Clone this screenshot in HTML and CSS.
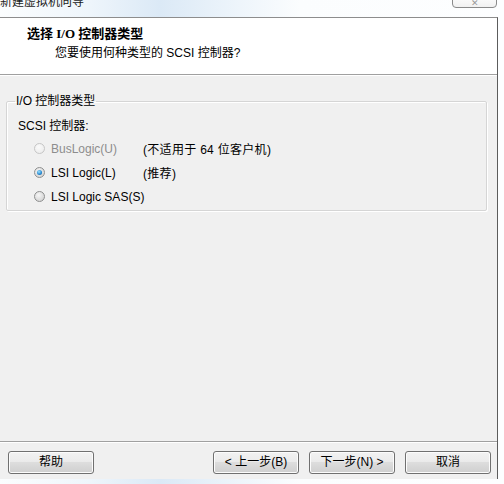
FILE: index.html
```html
<!DOCTYPE html>
<html lang="zh-CN">
<head>
<meta charset="utf-8">
<title>新建虚拟机向导</title>
<link rel="stylesheet" href="styles.css">
</head>
<body>
<div class="window">
  <div class="titlebar">
    <span class="title-text">新建虚拟机向导</span>
    <span class="close-btn"><span class="close-glyph">✕</span></span>
  </div>
  <div class="dialog">
    <div class="header">
      <div class="header-title">选择 I/O 控制器类型</div>
      <div class="header-sub">您要使用何种类型的 SCSI 控制器?</div>
    </div>
    <div class="main">
      <fieldset class="group">
        <legend class="group-legend">I/O 控制器类型</legend>
        <div class="row label-row">SCSI 控制器:</div>
        <div class="row radio-row disabled">
          <span class="radio"></span>
          <span class="radio-label">BusLogic(U)</span>
          <span class="note">(不适用于 64 位客户机)</span>
        </div>
        <div class="row radio-row">
          <span class="radio checked"></span>
          <span class="radio-label">LSI Logic(L)</span>
          <span class="note">(推荐)</span>
        </div>
        <div class="row radio-row">
          <span class="radio"></span>
          <span class="radio-label">LSI Logic SAS(S)</span>
        </div>
      </fieldset>
    </div>
    <div class="footer">
      <button class="btn">帮助</button>
      <span class="spacer"></span>
      <button class="btn">&lt; 上一步(B)</button>
      <button class="btn">下一步(N) &gt;</button>
      <button class="btn">取消</button>
    </div>
  </div>
  <div class="bottom-strip"></div>
</div>
</body>
</html>
```
FILE: styles.css
```css
html, body {
  margin: 0;
  padding: 0;
}
body {
  width: 504px;
  height: 484px;
  overflow: hidden;
  font-family: "Liberation Sans", "Noto Sans CJK SC", sans-serif;
  font-size: 12px;
  color: #000;
  background: #fdfeff;
}
.window {
  width: 504px;
  height: 484px;
  display: flex;
  flex-direction: column;
  background: linear-gradient(90deg, #fbfdfe 0px, #eef5fb 90px, #dbe9f6 160px, #eef5fb 240px, #fbfdfe 300px, #fdfeff 100%);
}
.titlebar {
  position: relative;
  height: 17px;
  flex: none;
  overflow: hidden;
}
.title-text {
  display: block;
  line-height: 12px;
  margin-top: -4px;
  margin-left: 0;
  font-size: 12px;
  color: #1a1a1a;
}
.close-btn {
  position: absolute;
  left: 452px;
  top: -6px;
  width: 43px;
  height: 12px;
  border: 1px solid #8a8a8a;
  border-radius: 0 0 4px 4px;
  background: linear-gradient(#ffffff, #f1f1f1);
  overflow: hidden;
  text-align: center;
}
.close-glyph {
  display: inline-block;
  font-size: 9px;
  line-height: 10px;
  margin-top: 1px;
  color: #9a9a9a;
}
.dialog {
  width: 497px;
  height: 461px;
  flex: none;
  border-top: 1px solid #8d8d8d;
  border-right: 1px solid #5c5c5c;
  background: #f0f0f0;
  display: flex;
  flex-direction: column;
}
.header {
  height: 56px;
  flex: none;
  background: #fff;
  border-bottom: 1px solid #a0a0a0;
  box-shadow: 0 1px 0 #ffffff;
  box-sizing: content-box;
}
.header-title {
  font-weight: bold;
  line-height: 14px;
  margin: 9px 0 0 27px;
  font-family: "Liberation Serif", "Noto Sans CJK SC", serif;
  font-size: 13px;
}
.header-sub {
  line-height: 14px;
  margin: 5px 0 0 55px;
}
.main {
  flex: 1;
  padding: 20px 0 0 6px;
}
.group {
  margin: 0;
  width: 470px;
  padding: 5px 0 2px 9px;
  border: 1px solid #d5d5d5;
  box-shadow: inset 1px 1px 0 #fff, 1px 1px 0 #fff;
  border-radius: 2px;
  min-width: 0;
}
.group-legend {
  padding: 0 1px;
  margin-left: -1px;
  line-height: 12px;
  font-size: 12px;
}
.row {
  height: 24px;
  display: flex;
  align-items: center;
  white-space: nowrap;
}
.label-row {
  padding-left: 2px;
}
.radio-row {
  padding-left: 18px;
}
.radio-row:nth-of-type(n+2) {
  padding-top: 1px;
  box-sizing: border-box;
}
.radio {
  width: 11px;
  height: 11px;
  border-radius: 50%;
  border: 1px solid #8e8f8f;
  background: radial-gradient(circle at 40% 35%, #f6f6f6 0%, #dcdcdc 60%, #cbcbcb 100%);
  box-sizing: border-box;
  flex: none;
  position: relative;
}
.radio.checked::after {
  content: "";
  position: absolute;
  left: 2px;
  top: 2px;
  width: 5px;
  height: 5px;
  border-radius: 50%;
  background: radial-gradient(circle at 40% 35%, #9fe3ff 0%, #2a8dd4 55%, #13508a 100%);
}
.disabled .radio {
  border-color: #c6c6c6;
  background: radial-gradient(circle at 40% 35%, #fafafa 0%, #eeeeee 70%, #e4e4e4 100%);
}
.radio-label {
  margin-left: 6px;
  min-width: 92px;
  flex: none;
}
.disabled .radio-label {
  color: #8d8d8d;
}
.note {
  color: #000;
  letter-spacing: 0.3px;
}
.footer {
  flex: none;
  border-top: 1px solid #a0a0a0;
  box-shadow: inset 0 1px 0 #ffffff;
  display: flex;
  align-items: flex-start;
  padding: 9px 0 0 8px;
  gap: 10px;
  box-sizing: border-box;
  height: 38px;
}
.spacer {
  flex: none;
  width: 99px;
}
.btn {
  width: 86px;
  height: 23px;
  margin: 0;
  padding: 0;
  border: 1px solid #707070;
  border-radius: 3px;
  background: linear-gradient(#f2f2f2 0%, #ebebeb 45%, #dddddd 50%, #cfcfcf 100%);
  box-shadow: inset 0 0 0 1px #fcfcfc;
  font-family: "Liberation Sans", "Noto Sans CJK SC", sans-serif;
  font-size: 12px;
  color: #000;
  line-height: 21px;
}
.bottom-strip {
  flex: 1;
}
```
